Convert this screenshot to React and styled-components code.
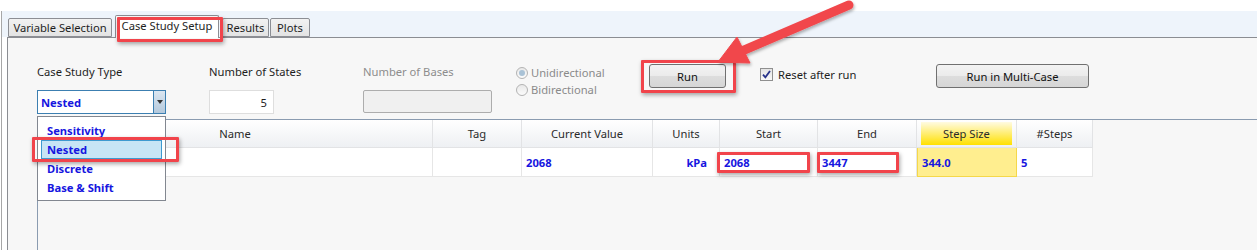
import React from "react";
import styled, { createGlobalStyle } from "styled-components";

const GlobalStyle = createGlobalStyle`
body {
  margin: 0;
  background: #ffffff;
  font-family: "Noto Sans", "Open Sans", sans-serif;
  font-size: 11.2px;
  color: #1e1e1e;
}
* { box-sizing: border-box; }
`;

const blue = "#1616e0";

const Page = styled.div`
  position: relative;
  width: 1257px;
  height: 250px;
  overflow: hidden;
  padding-top: 11px;
  display: flex;
  flex-direction: column;
`;

const Frame = styled.div`
  flex: 1;
  margin-left: 1px;
  border-left: 1px solid #a7a7a7;
  display: flex;
  flex-direction: column;
`;

const TabBand = styled.div`
  height: 26px;
  background: #eef4fb;
  display: flex;
  align-items: flex-end;
  padding-left: 6px;
`;

const Tab = styled.div`
  position: relative;
  z-index: ${p => (p.$active ? 2 : 1)};
  width: ${p => p.$w}px;
  height: ${p => (p.$active ? 23 : 19)}px;
  margin: ${p => (p.$active ? "0 3px -1px 2px" : "0 1px 0 0")};
  border: 1px solid #8c8e94;
  border-bottom: ${p => (p.$active ? "none" : "1px solid #8c8e94")};
  border-radius: 2px 2px 0 0;
  background: ${p => (p.$active ? "#ffffff" : "linear-gradient(#f2f2f2, #e3e3e3)")};
  display: flex;
  align-items: center;
  justify-content: center;
  padding-bottom: ${p => (p.$active ? 3 : 0)}px;
  white-space: nowrap;
`;

const Highlight = styled.div`
  position: absolute;
  z-index: 5;
  left: ${p => p.$l}px;
  top: ${p => p.$t}px;
  width: ${p => p.$w}px;
  height: ${p => p.$h}px;
  border: 3px solid #f1444b;
  border-radius: 1px;
  box-shadow: 1px 2px 4px rgba(0, 0, 0, 0.35);
  pointer-events: none;
`;

const Panel = styled.div`
  flex: 1;
  margin-left: 5px;
  border-top: 1px solid #8b8d92;
  border-left: 1px solid #8b8d92;
  background: #f7f7f7;
  display: flex;
  flex-direction: column;
`;

const Controls = styled.div`
  display: flex;
  align-items: flex-start;
  padding: 26px 0 0 29px;
  height: 76px;
`;

const Field = styled.div`
  position: relative;
  width: ${p => p.$w}px;
  flex-shrink: 0;
  display: flex;
  flex-direction: column;
`;

const Label = styled.div`
  height: 16px;
  line-height: 16px;
  color: ${p => (p.$disabled ? "#8d8d8d" : "#1e1e1e")};
  margin-bottom: 10px;
  white-space: nowrap;
`;

const Combo = styled.div`
  width: 129px;
  height: 24px;
  border: 1px solid #3c7fb1;
  background: #fff;
  display: flex;
  align-items: stretch;
`;

const ComboText = styled.div`
  flex: 1;
  padding-left: 3px;
  display: flex;
  align-items: center;
  font-weight: 700;
  color: ${blue};
`;

const ComboButton = styled.div`
  width: 12px;
  border-left: 1px solid #3c7fb1;
  background: linear-gradient(#dbe6f1, #b4c9dc);
  display: flex;
  align-items: center;
  justify-content: center;
  &::after {
    content: "";
    border-left: 3px solid transparent;
    border-right: 3px solid transparent;
    border-top: 4px solid #333;
  }
`;

const TextBox = styled.div`
  width: ${p => p.$w}px;
  height: ${p => p.$h || 24}px;
  border: 1px solid ${p => (p.$disabled ? "#adadad" : "#dedede")};
  border-radius: ${p => (p.$disabled ? 2 : 0)}px;
  background: ${p => (p.$disabled ? "#f0f0f0" : "#ffffff")};
  display: flex;
  align-items: center;
  justify-content: flex-end;
  padding-right: 6px;
`;

const RadioGroup = styled.div`
  width: 132px;
  flex-shrink: 0;
  display: flex;
  flex-direction: column;
`;

const RadioRow = styled.div`
  height: 17px;
  display: flex;
  align-items: center;
  gap: 3px;
  color: #8a8a8a;
  margin-left: -1px;
`;

const RadioDot = styled.span`
  width: 12px;
  height: 12px;
  border-radius: 50%;
  border: 1px solid #b3b3b3;
  background: linear-gradient(#e9e9e9, #fbfbfb);
  display: flex;
  align-items: center;
  justify-content: center;
  &::after {
    content: "";
    display: ${p => (p.$on ? "block" : "none")};
    width: 6px;
    height: 6px;
    border-radius: 50%;
    background: #a9c2d6;
  }
`;

const Button = styled.div`
  position: relative;
  width: ${p => p.$w}px;
  height: 24px;
  border: 1px solid #707070;
  border-radius: 3px;
  background: linear-gradient(#f3f3f3 0%, #ebebeb 50%, #dddddd 51%, #d6d6d6 100%);
  display: flex;
  align-items: center;
  justify-content: center;
  color: #111;
  white-space: nowrap;
`;

const CheckRow = styled.div`
  width: 176px;
  flex-shrink: 0;
  display: flex;
  align-items: center;
  gap: 5px;
  margin-top: 3px;
`;

const CheckBox = styled.span`
  width: 13px;
  height: 13px;
  border: 1px solid #8f8f8f;
  background: linear-gradient(#e4e4e4, #f8f8f8);
  display: flex;
  align-items: center;
  justify-content: center;
`;

const TableArea = styled.div`
  position: relative;
  flex: 1;
  margin: 5px 0 0 29px;
  border-top: 1px solid #8a9bb0;
  border-left: 1px solid #8a9bb0;
`;

const Grid = styled.div`
  display: grid;
  grid-template-columns: 395px 89px 131px 67px 98px 99px 100px 76px;
  width: 1055px;
`;

const HeadCell = styled.div`
  height: 28px;
  border-right: 1px solid #e2e3e5;
  border-bottom: 1px solid #e2e3e5;
  background: linear-gradient(#ffffff, #eef0f3);
  display: flex;
  align-items: center;
  justify-content: center;
  padding: ${p => (p.$hot ? "2px 4px 2px 4px" : "0")};
  color: #2a2a2a;
`;

const HotHead = styled.div`
  width: 100%;
  height: 100%;
  background: linear-gradient(#fffbe2, #ffe000);
  display: flex;
  align-items: center;
  justify-content: center;
`;

const Cell = styled.div`
  position: relative;
  height: 29px;
  border-right: 1px solid ${p => (p.$hot ? "#f5d84a" : "#e6e6e6")};
  border-bottom: 1px solid ${p => (p.$hot ? "#f5d84a" : "#e6e6e6")};
  border-left: ${p => (p.$hot ? "1px solid #f5d84a" : "none")};
  background: ${p => (p.$hot ? "#ffee8f" : "#ffffff")};
  display: flex;
  align-items: center;
  justify-content: ${p => (p.$right ? "flex-end" : "flex-start")};
  padding: ${p => (p.$right ? "0 12px 0 0" : "0 0 0 4px")};
  font-weight: 700;
  color: ${blue};
`;

const DropList = styled.div`
  position: absolute;
  z-index: 4;
  left: -1px;
  top: -4px;
  width: 129px;
  height: 85px;
  border: 1px solid #828790;
  background: #ffffff;
  padding: 4px 3px;
`;

const DropItem = styled.div`
  height: 19px;
  display: flex;
  align-items: center;
  padding-left: 5px;
  font-weight: 700;
  color: ${blue};
  border: 1px solid ${p => (p.$sel ? "#3e9ad0" : "transparent")};
  background: ${p => (p.$sel ? "#c7e5f5" : "transparent")};
`;

const ArrowSvg = styled.svg`
  position: absolute;
  z-index: 6;
  left: 700px;
  top: 0;
  pointer-events: none;
`;

const cols = ["Name", "Tag", "Current Value", "Units", "Start", "End", "Step Size", "#Steps"];

export default function App() {
  return (
    <Page>
      <GlobalStyle />
      <Frame>
        <TabBand>
          <Tab $w={104}>Variable Selection</Tab>
          <Tab $w={104} $active>
            Case Study Setup
            <Highlight $l={1} $t={1} $w={106} $h={25} />
          </Tab>
          <Tab $w={47}>Results</Tab>
          <Tab $w={40}>Plots</Tab>
        </TabBand>
        <Panel>
          <Controls>
            <Field $w={172}>
              <Label>Case Study Type</Label>
              <Combo>
                <ComboText>Nested</ComboText>
                <ComboButton />
              </Combo>
            </Field>
            <Field $w={154}>
              <Label>Number of States</Label>
              <TextBox $w={65}>5</TextBox>
            </Field>
            <Field $w={154}>
              <Label $disabled>Number of Bases</Label>
              <TextBox $w={129} $h={23} $disabled />
            </Field>
            <RadioGroup>
              <RadioRow>
                <RadioDot $on />
                Unidirectional
              </RadioRow>
              <RadioRow>
                <RadioDot />
                Bidirectional
              </RadioRow>
            </RadioGroup>
            <Field $w={111}>
              <Button $w={77}>
                Run
                <Highlight $l={-9} $t={-5} $w={95} $h={33} />
              </Button>
            </Field>
            <CheckRow>
              <CheckBox>
                <svg width="9" height="9" viewBox="0 0 9 9">
                  <path d="M1 4.6 L3.4 7.4 L8 1" fill="none" stroke="#27338a" strokeWidth="1.8" />
                </svg>
              </CheckBox>
              Reset after run
            </CheckRow>
            <Button $w={153}>Run in Multi-Case</Button>
          </Controls>
          <TableArea>
            <Grid>
              {cols.map(c =>
                c === "Step Size" ? (
                  <HeadCell key={c} $hot>
                    <HotHead>{c}</HotHead>
                  </HeadCell>
                ) : (
                  <HeadCell key={c}>{c}</HeadCell>
                )
              )}
              <Cell />
              <Cell />
              <Cell>2068</Cell>
              <Cell $right>kPa</Cell>
              <Cell>
                2068
                <Highlight $l={-3} $t={4} $w={93} $h={21} />
              </Cell>
              <Cell>
                3447
                <Highlight $l={-1} $t={4} $w={82} $h={21} />
              </Cell>
              <Cell $hot>344.0</Cell>
              <Cell>5</Cell>
            </Grid>
            <DropList>
              <DropItem>Sensitivity</DropItem>
              <DropItem $sel>Nested</DropItem>
              <DropItem>Discrete</DropItem>
              <DropItem>Base &amp; Shift</DropItem>
              <Highlight $l={-6} $t={20} $w={147} $h={25} />
            </DropList>
          </TableArea>
        </Panel>
      </Frame>
      <ArrowSvg width="160" height="72" viewBox="0 0 160 72">
        <defs>
          <filter id="sh" x="-20%" y="-20%" width="140%" height="150%">
            <feDropShadow dx="1" dy="2" stdDeviation="1.5" floodColor="#000" floodOpacity="0.3" />
          </filter>
        </defs>
        <g filter="url(#sh)" fill="#f1474c" stroke="#f1474c">
          <line x1="149" y1="5" x2="42" y2="51" strokeWidth="9" strokeLinecap="round" />
          <polygon points="18,62 37,37 50,63" strokeWidth="1" strokeLinejoin="round" />
        </g>
      </ArrowSvg>
    </Page>
  );
}
